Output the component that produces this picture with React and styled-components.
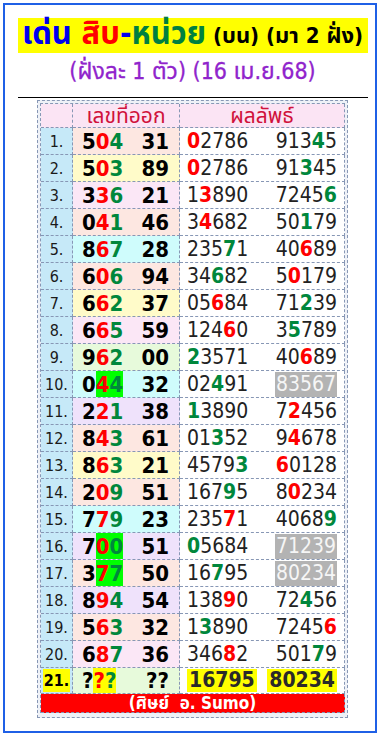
import styled, { createGlobalStyle } from "styled-components";

const GlobalStyle = createGlobalStyle`
  html, body {
    margin: 0;
    padding: 0;
    background: #ffffff;
  }
  body {
    font-family: "DejaVu Sans Condensed", "DejaVu Sans", "Noto Sans Thai", "Noto Sans", sans-serif;
  }
`;

const pickBg = {
  peach: "#fde7e1",
  yellow: "#fffbc9",
  pink: "#fbe7f6",
  cyan: "#cffcfc",
  green: "#e7fadb",
  lavender: "#efe2fb",
};

const tint = {
  r: "#ff0000",
  g: "#00873c",
  k: "#000000",
};

// [pick, tail, bg, highlight, result1, result2]
// result = [digits, index of coloured digit, colour] ; colour "x" = greyed out
const rows = [
  ["504", "31", "peach", false, ["02786", 0, "r"], ["91345", 3, "g"]],
  ["503", "89", "yellow", false, ["02786", 0, "r"], ["91345", 2, "g"]],
  ["336", "21", "pink", false, ["13890", 1, "r"], ["72456", 4, "g"]],
  ["041", "46", "peach", false, ["34682", 1, "r"], ["50179", 2, "g"]],
  ["867", "28", "cyan", false, ["23571", 3, "g"], ["40689", 2, "r"]],
  ["606", "94", "peach", false, ["34682", 2, "g"], ["50179", 1, "r"]],
  ["662", "37", "yellow", false, ["05684", 2, "r"], ["71239", 2, "g"]],
  ["665", "59", "pink", false, ["12460", 3, "r"], ["35789", 1, "g"]],
  ["962", "00", "green", false, ["23571", 0, "g"], ["40689", 2, "r"]],
  ["044", "32", "cyan", true, ["02491", 2, "g"], ["83567", -1, "x"]],
  ["221", "38", "lavender", false, ["13890", 0, "g"], ["72456", 1, "r"]],
  ["843", "61", "peach", false, ["01352", 2, "g"], ["94678", 1, "r"]],
  ["863", "21", "yellow", false, ["45793", 4, "g"], ["60128", 0, "r"]],
  ["209", "51", "peach", false, ["16795", 3, "g"], ["80234", 1, "r"]],
  ["779", "23", "cyan", false, ["23571", 3, "r"], ["40689", 4, "g"]],
  ["700", "51", "lavender", true, ["05684", 0, "g"], ["71239", -1, "x"]],
  ["377", "50", "peach", true, ["16795", 2, "g"], ["80234", -1, "x"]],
  ["894", "54", "lavender", false, ["13890", 3, "r"], ["72456", 2, "g"]],
  ["563", "32", "peach", false, ["13890", 1, "g"], ["72456", 4, "r"]],
  ["687", "36", "pink", false, ["34682", 3, "r"], ["50179", 3, "g"]],
];

function Result({ value }) {
  const [digits, at, color] = value;
  if (color === "x") return <Greyed>{digits}</Greyed>;
  return (
    <Number>
      {digits.split("").map((d, i) =>
        i === at ? (
          <Digit key={i} $color={tint[color]} $bold>
            {d}
          </Digit>
        ) : (
          <Digit key={i}>{d}</Digit>
        )
      )}
    </Number>
  );
}

function Pick({ digits, highlight }) {
  return (
    <Group>
      <Digit $color={tint.k}>{digits[0]}</Digit>
      <Mark $bg={highlight ? "#00ff00" : "transparent"}>
        <Digit $color={tint.r}>{digits[1]}</Digit>
        <Digit $color={tint.g}>{digits[2]}</Digit>
      </Mark>
    </Group>
  );
}

function App() {
  return (
    <>
      <GlobalStyle />
      <Frame>
        <Column>
          <TitleBar>
            <Word $color="#0000f0">เด่น </Word>
            <Word $color="#ff0000">สิบ</Word>
            <Word $color="#0000f0">-</Word>
            <Word $color="#008040">หน่วย</Word>
            <Small> (บน) (มา 2 ฝั่ง)</Small>
          </TitleBar>
          <Sub>(ฝั่งละ 1 ตัว) (16 เม.ย.68)</Sub>
          <Rule />
          <Board>
            <Grid>
              <HeadCell />
              <HeadCell>
                <HeadText>เลขที่ออก</HeadText>
              </HeadCell>
              <HeadCell>
                <HeadText>ผลลัพธ์</HeadText>
              </HeadCell>

              {rows.map(([pick, tail, bg, hi, r1, r2], i) => (
                <Row key={i}>
                  <IndexCell>{i + 1}.</IndexCell>
                  <PickCell $bg={pickBg[bg]}>
                    <Pick digits={pick} highlight={hi} />
                    <Group>{tail}</Group>
                  </PickCell>
                  <ResultCell>
                    <Result value={r1} />
                    <Result value={r2} />
                  </ResultCell>
                </Row>
              ))}

              <IndexCell>
                <Badge>21.</Badge>
              </IndexCell>
              <PickCell $bg={pickBg.green}>
                <Group>
                  <Digit $color={tint.k}>?</Digit>
                  <Mark $bg="#ffff00">
                    <Digit $color={tint.r}>?</Digit>
                    <Digit $color={tint.g}>?</Digit>
                  </Mark>
                </Group>
                <Group>??</Group>
              </PickCell>
              <ResultCell>
                <Boxed>16795</Boxed>
                <Boxed>80234</Boxed>
              </ResultCell>

              <Footer>(ศิษย์&nbsp; อ. Sumo)</Footer>
            </Grid>
          </Board>
        </Column>
      </Frame>
    </>
  );
}

export default App;

const Frame = styled.div`
  box-sizing: border-box;
  margin: 3px;
  width: 374px;
  height: 730px;
  border: 2px solid #1f60e6;
  padding-left: 5px;
`;

const Column = styled.div`
  display: flex;
  flex-direction: column;
  align-items: center;
  padding-top: 13px;
`;

const TitleBar = styled.div`
  box-sizing: border-box;
  width: 350px;
  height: 35px;
  background: #ffff00;
  display: flex;
  align-items: flex-end;
  justify-content: center;
  white-space: pre;
  font-weight: bold;
`;

const Word = styled.span`
  color: ${(p) => p.$color};
  font-size: 31px;
  line-height: 40px;
`;

const Small = styled.span`
  color: #000;
  font-size: 22px;
  line-height: 34px;
`;

const Sub = styled.div`
  margin-top: 2px;
  height: 32px;
  line-height: 32px;
  color: #9024cc;
  font-size: 23px;
  -webkit-text-stroke: 0.3px #9024cc;
`;

const Rule = styled.div`
  margin-top: 10px;
  width: 350px;
  height: 1px;
  background: #000;
`;

const Board = styled.div`
  margin-top: 2px;
  box-sizing: border-box;
  width: 311px;
  border: 1px dashed #8797b5;
  padding: 2px 2px 4px;
  background: #eef1f7;
`;

const Grid = styled.div`
  display: grid;
  grid-template-columns: 32px 107px 165px;
  grid-template-rows: 24px repeat(20, 27px) 26px 19px;
  border-top: 1px dashed #8797b5;
  border-left: 1px dashed #8797b5;
`;

const Row = styled.div`
  display: contents;
`;

const BaseCell = styled.div`
  box-sizing: border-box;
  border-right: 1px dashed #8797b5;
  border-bottom: 1px dashed #8797b5;
  display: flex;
  align-items: center;
  overflow: hidden;
`;

const HeadCell = styled(BaseCell)`
  background: #fbe4f4;
  justify-content: center;
`;

const HeadText = styled.span`
  color: #d0123c;
  font-size: 21px;
  line-height: 22px;
`;

const IndexCell = styled(BaseCell)`
  background: #c6e9f8;
  justify-content: center;
  color: #1a1a1a;
  font-size: 16px;
`;

const Badge = styled.span`
  background: #ffff00;
  color: #000;
  font-weight: bold;
  font-size: 16px;
  padding: 2px 1px;
`;

const PickCell = styled(BaseCell)`
  background: ${(p) => p.$bg};
  justify-content: space-between;
  align-items: stretch;
  padding: 0 10px 0 9px;
  font-weight: bold;
  font-size: 22px;
  color: #000;
`;

const Group = styled.span`
  display: flex;
  align-items: center;
`;

const Mark = styled.span`
  display: flex;
  align-items: center;
  align-self: stretch;
  background: ${(p) => p.$bg};
`;

const Digit = styled.span`
  color: ${(p) => p.$color || "inherit"};
  font-weight: ${(p) => (p.$bold ? "bold" : "inherit")};
`;

const ResultCell = styled(BaseCell)`
  background: #ffffff;
  justify-content: space-between;
  padding: 0 7px;
  font-size: 21px;
  color: #222222;
`;

const Number = styled.span`
  display: flex;
`;

const Greyed = styled.span`
  background: #b3b3b3;
  color: #f6f6f6;
  line-height: 25px;
  padding: 0 1px;
`;

const Boxed = styled.span`
  background: #ffff00;
  color: #2a2a2a;
  font-weight: bold;
  line-height: 23px;
  padding: 0 2px;
`;

const Footer = styled(BaseCell)`
  grid-column: 1 / -1;
  background: #ff0000;
  justify-content: center;
  color: #ffffff;
  font-weight: bold;
  font-size: 17px;
  line-height: 18px;
  overflow: visible;
`;
